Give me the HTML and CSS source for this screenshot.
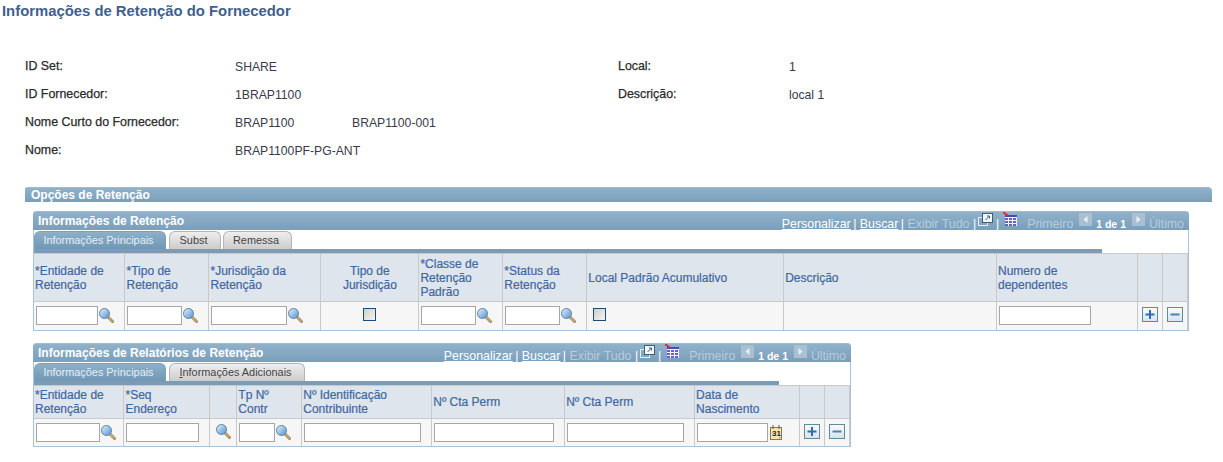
FILE: index.html
```html
<!doctype html>
<html>
<head>
	<title>Informações de Retenção do Fornecedor</title>
	<link rel="stylesheet" href="styles.css">
</head>

<body>
<svg class="defs" width="0" height="0">
	<defs>
		<linearGradient id="lens" x1="0" y1="0" x2="1" y2="1">
			<stop offset="0" stop-color="#e8f2fb"/>
			<stop offset="1" stop-color="#4f8fd0"/>
		</linearGradient>
		<linearGradient id="btnfill" x1="0" y1="0" x2="0" y2="1">
			<stop offset="0" stop-color="#fafcfd"/>
			<stop offset="1" stop-color="#d6e2ea"/>
		</linearGradient>
		<symbol id="lookup" viewBox="0 0 15 15">
			<path d="M9 9L13.500 13.500" stroke="#8a8a7a" stroke-width="3" stroke-linecap="round"/>
			<path d="M9.500 9.500L13.300 13.300" stroke="#e2a45c" stroke-width="1.500" stroke-linecap="round"/>
			<circle cx="5.500" cy="5.500" r="5" fill="url(#lens)" stroke="#5b84a8" stroke-width="1"/>
		</symbol>
		<symbol id="add" viewBox="0 0 16 15">
			<rect x=".5" y=".5" width="15" height="14" fill="url(#btnfill)" stroke="#5f8a9c"/>
			<path d="M8 3v9M3.500 7.500h9" stroke="#2f6db0" stroke-width="2"/>
		</symbol>
		<symbol id="del" viewBox="0 0 16 15">
			<rect x=".5" y=".5" width="15" height="14" fill="url(#btnfill)" stroke="#5f8a9c"/>
			<path d="M3.500 7.500h9" stroke="#4a80b8" stroke-width="2"/>
		</symbol>
		<symbol id="popout" viewBox="0 0 15 14">
			<rect x=".5" y="4.500" width="9" height="8" fill="none" stroke="#e8eef3"/>
			<rect x="4.500" y=".5" width="10" height="9" fill="#f4f7f9" stroke="#3d5f78"/>
			<path d="M7.500 7L11.500 3M9 3h2.500v2.500" fill="none" stroke="#3d5f78"/>
		</symbol>
		<symbol id="sheet" viewBox="0 0 14 14">
			<path d="M2 3h12v11H2z" fill="#f2f2fb"/>
			<path d="M2 3h12v2H2z" fill="#4a4ab0"/>
			<path d="M2 6h3v2H2zM6 6h3v2H6zM10 6h3v2h-3zM2 9h3v2H2zM6 9h3v2H6zM10 9h3v2h-3zM2 12h3v2H2zM6 12h3v2H6zM10 12h3v2h-3z" fill="#6464c8"/>
			<path d="M0 0l4.500 3.500" stroke="#e02a2a" stroke-width="2"/>
		</symbol>
		<symbol id="prev" viewBox="0 0 13 13">
			<rect width="13" height="13" fill="#a9c0d3"/>
			<path d="M8.500 3v7L4.500 6.500z" fill="#e8f0f5"/>
		</symbol>
		<symbol id="next" viewBox="0 0 13 13">
			<rect width="13" height="13" fill="#a9c0d3"/>
			<path d="M4.500 3v7L8.500 6.500z" fill="#e8f0f5"/>
		</symbol>
		<symbol id="calendar" viewBox="0 0 12 15">
			<rect x=".5" y="2.500" width="11" height="12" fill="#f4e6b4" stroke="#8a7a4a"/>
			<path d="M3 0v4M9 0v4" stroke="#7a5a2a"/>
			<path d="M9 14.500L11.500 12H9z" fill="#c8b070"/>
		</symbol>
	</defs>
</svg>

<h1 class="title">Informações de Retenção do Fornecedor</h1>

<div class="info">
	<div class="lbl">ID Set:</div>
	<div class="val">SHARE</div>
	<div class="lbl">Local:</div>
	<div class="val">1</div>
	<div class="lbl">ID Fornecedor:</div>
	<div class="val">1BRAP1100</div>
	<div class="lbl">Descrição:</div>
	<div class="val">local 1</div>
	<div class="lbl">Nome Curto do Fornecedor:</div>
	<div class="val val-pair"><span class="short">BRAP1100</span><span>BRAP1100-001</span></div>
	<div class="lbl"></div>
	<div class="val"></div>
	<div class="lbl">Nome:</div>
	<div class="val">BRAP1100PF-PG-ANT</div>
</div>

<div class="section-bar">Opções de Retenção</div>

<div class="grid grid-main">
	<div class="grid-head">
		<span class="grid-title">Informações de Retenção</span>
		<span class="nav">
			<a href="#">Personalizar</a> | <a href="#">Buscar</a> | <span class="off">Exibir Tudo</span> |
			<svg class="nav-pop"><use href="#popout"/></svg> |
			<svg class="nav-sheet"><use href="#sheet"/></svg>
			<span class="off first">Primeiro</span>
			<svg class="nav-arrow arrow-prev"><use href="#prev"/></svg>
			<b class="count">1 de 1</b>
			<svg class="nav-arrow"><use href="#next"/></svg>
			<span class="off">Último</span>
		</span>
	</div>
	<div class="tabs">
		<span class="tab on tab-a">Informações Principais</span>
		<span class="tab tab-b">Subst</span>
		<span class="tab tab-c">Remessa</span>
	</div>
	<div class="tab-line line-main"></div>
	<table class="tbl">
		<colgroup>
			<col class="w91"><col class="w84"><col class="w112"><col class="w98"><col class="w84"><col class="w84"><col class="w197"><col class="w213"><col class="w141"><col class="w25"><col class="w25">
		</colgroup>
		<tr class="hd hd-tall">
			<th><i>*</i>Entidade de<br>Retenção</th>
			<th><i>*</i>Tipo de<br>Retenção</th>
			<th><i>*</i>Jurisdição da<br>Retenção</th>
			<th class="mid">Tipo de<br>Jurisdição</th>
			<th><i>*</i>Classe de<br>Retenção<br>Padrão</th>
			<th><i>*</i>Status da<br>Retenção</th>
			<th>Local Padrão Acumulativo</th>
			<th>Descrição</th>
			<th>Numero de<br>dependentes</th>
			<th></th>
			<th></th>
		</tr>
		<tr class="row">
			<td><input class="in in-62" type="text"><svg class="look"><use href="#lookup"/></svg></td>
			<td><input class="in in-55" type="text"><svg class="look"><use href="#lookup"/></svg></td>
			<td><input class="in in-76" type="text"><svg class="look"><use href="#lookup"/></svg></td>
			<td class="mid"><span class="check"></span></td>
			<td><input class="in in-55" type="text"><svg class="look"><use href="#lookup"/></svg></td>
			<td><input class="in in-55" type="text"><svg class="look"><use href="#lookup"/></svg></td>
			<td><span class="check check-left"></span></td>
			<td></td>
			<td><input class="in in-92" type="text"></td>
			<td class="mid"><svg class="btn"><use href="#add"/></svg></td>
			<td class="mid"><svg class="btn"><use href="#del"/></svg></td>
		</tr>
	</table>
</div>

<div class="grid grid-sub">
	<div class="grid-head">
		<span class="grid-title">Informações de Relatórios de Retenção</span>
		<span class="nav">
			<a href="#">Personalizar</a> | <a href="#">Buscar</a> | <span class="off">Exibir Tudo</span> |
			<svg class="nav-pop"><use href="#popout"/></svg> |
			<svg class="nav-sheet"><use href="#sheet"/></svg>
			<span class="off first">Primeiro</span>
			<svg class="nav-arrow arrow-prev"><use href="#prev"/></svg>
			<b class="count">1 de 1</b>
			<svg class="nav-arrow"><use href="#next"/></svg>
			<span class="off">Último</span>
		</span>
	</div>
	<div class="tabs">
		<span class="tab on tab-a">Informações Principais</span>
		<span class="tab tab-d"><u>I</u>nformações Adicionais</span>
	</div>
	<div class="tab-line line-sub"></div>
	<table class="tbl">
		<colgroup>
			<col class="w90"><col class="w86"><col class="w27"><col class="w65"><col class="w130"><col class="w133"><col class="w130"><col class="w105"><col class="w25"><col class="w25">
		</colgroup>
		<tr class="hd hd-short">
			<th><i>*</i>Entidade de<br>Retenção</th>
			<th><i>*</i>Seq<br>Endereço</th>
			<th></th>
			<th>Tp Nº<br>Contr</th>
			<th>Nº Identificação<br>Contribuinte</th>
			<th>Nº Cta Perm</th>
			<th>Nº Cta Perm</th>
			<th>Data de<br>Nascimento</th>
			<th></th>
			<th></th>
		</tr>
		<tr class="row">
			<td><input class="in in-64" type="text"><svg class="look"><use href="#lookup"/></svg></td>
			<td><input class="in in-73" type="text"></td>
			<td class="mid"><svg class="look look-alone"><use href="#lookup"/></svg></td>
			<td><input class="in in-36" type="text"><svg class="look"><use href="#lookup"/></svg></td>
			<td><input class="in in-117" type="text"></td>
			<td><input class="in in-120" type="text"></td>
			<td><input class="in in-117" type="text"></td>
			<td><input class="in in-71" type="text"><span class="cal"><svg class="cal-icon"><use href="#calendar"/></svg><span class="cal-num">31</span></span></td>
			<td class="mid"><svg class="btn"><use href="#add"/></svg></td>
			<td class="mid"><svg class="btn"><use href="#del"/></svg></td>
		</tr>
	</table>
</div>
</body>
</html>
```

FILE: styles.css
```css
body {margin: 0; background: #fff; font-family: 'Liberation Sans', Arial, sans-serif; font-size: 12px; color: #333;}
.defs {display: block; height: 0;}

.title {margin: 0; padding: 3px 0 0 2px; height: 52px; box-sizing: border-box; font-size: 14.85px; line-height: 16px; font-weight: bold; color: #3f5f8e;}

.info {display: grid; grid-template-columns: 210px 383px 171px 200px; grid-auto-rows: 28px; margin-left: 25px; height: 135px;}
.lbl {font-size: 12.4px; color: #2b2b2b; line-height: 28px; -webkit-text-stroke: .25px #2b2b2b;}
.val {font-size: 12.2px; line-height: 30px; color: #3a3a4a;}
.short {display: inline-block; width: 117px;}

.section-bar {margin-left: 25px; width: 1187px; height: 15px; box-sizing: border-box; border-top: 1px solid #a9b9c6; border-top-right-radius: 4px; border-top-left-radius: 2px; background: linear-gradient(#90b1ca, #7a9fbb); color: #fff; font-weight: bold; font-size: 12px; line-height: 14px; padding-left: 6px;}

.grid {margin-left: 33px; box-sizing: border-box; border: 1px solid #a9c4da; border-top: 0; border-radius: 4px 4px 0 0;}
.grid-main {width: 1156px; margin-top: 9px;}
.grid-sub {width: 818px; margin-top: 12px;}

.grid-head {display: flex; justify-content: space-between; height: 19px; box-sizing: border-box; margin: 0 -1px; border-top: 1px solid #a9b9c6; border-radius: 4px 4px 0 0; background: linear-gradient(#90b1ca, #7a9fbb); padding: 0 5px 0 5px; line-height: 18px;}
.grid-title {color: #fff; font-weight: bold; font-size: 12px;}
.nav {color: #fff; font-size: 12.4px; line-height: 17px; white-space: nowrap;}
.nav a {color: #fff; margin-right: -1px;}
.nav .off {color: #b9ccdb;}
.nav .first {margin-left: 7px;}
.count {color: #fff; font-size: 10.5px; margin: 0 3px 0 1px;}
.nav-pop {width: 15px; height: 14px; margin-left: -2px; vertical-align: 1px;}
.nav-sheet {width: 14px; height: 14px; vertical-align: 2px;}
.nav-arrow {width: 13px; height: 13px; vertical-align: 2px;}
.arrow-prev {margin-left: 2px;}

.tabs {display: flex; height: 19px; padding-top: 1px; box-sizing: border-box;}
.tab {display: block; box-sizing: border-box; height: 18px; margin-right: 2px; padding-right: 3px; border: 1px solid #b4b4b4; border-bottom: 0; border-radius: 6px 6px 0 0; background: linear-gradient(#eee, #ccc); color: #444; font-size: 10.9px; line-height: 17px; text-align: center;}
.tab.on {border-color: #7a9fbb; background: linear-gradient(#8eb0c8, #6f97b5); color: #e6eef4; margin-right: 3px;}
.tab u {text-decoration: underline;}
.tab-a {width: 132px;}
.tab-b {width: 52px;}
.tab-c {width: 69px;}
.tab-d {width: 136px;}

.tab-line {height: 4px; background: #7d9bb3;}
.line-main {width: 1068px;}
.line-sub {width: 745px;}

.tbl {border-collapse: collapse; table-layout: fixed; font-size: 12px;}
.tbl th, .tbl td {border: 1px solid #c9c9c9; padding: 0 2px; box-sizing: border-box;}
.tbl th {padding: 0 1px;}
.tbl tr > :first-child {border-left: 0;}
.tbl tr:last-child td {border-bottom: 0;}
.tbl tr:first-child th {border-top: 1px solid #c9c9c9;}
.hd th {background: #dee5ec; color: #3f67a0; font-weight: normal; text-align: left; line-height: 14px; -webkit-text-stroke: .2px #3f67a0;}
.hd i {font-style: normal;}
.hd-tall {height: 48px;}
.hd-short {height: 33px;}
.row td {background: #f6f6f6; height: 28px; white-space: nowrap;}
.tbl .mid {text-align: center;}

.in {height: 19px; box-sizing: border-box; border: 1px solid #a6a6a6; background: #fff; padding: 0; margin: 0; vertical-align: middle;}
.in-36 {width: 36px;}
.in-55 {width: 55px;}
.in-62 {width: 62px;}
.in-64 {width: 64px;}
.in-71 {width: 71px;}
.in-73 {width: 73px;}
.in-76 {width: 76px;}
.in-92 {width: 92px;}
.in-117 {width: 117px;}
.in-120 {width: 120px;}

.look {width: 15px; height: 15px; margin-left: 1px; vertical-align: middle;}
.look-alone {margin: 0 0 2px;}
.check {display: inline-block; width: 13px; height: 13px; margin-bottom: 2px; box-sizing: border-box; border: 1px solid #1f4a74; background: linear-gradient(135deg, #cfcfca, #f4f4f4); vertical-align: middle;}
.check-left {margin-left: 4px;}
.btn {width: 16px; height: 15px; vertical-align: middle; margin-bottom: 2px;}

.cal {display: inline-block; width: 12px; height: 15px; margin-left: 2px; vertical-align: middle; position: relative;}
.cal-icon {display: block; width: 12px; height: 15px;}
.cal-num {position: absolute; left: 2px; top: 4px; font-size: 8px; line-height: 9px; font-weight: bold; color: #222;}

.w25 {width: 25px;}
.w27 {width: 27px;}
.w65 {width: 65px;}
.w84 {width: 84px;}
.w86 {width: 86px;}
.w90 {width: 90px;}
.w91 {width: 91px;}
.w98 {width: 98px;}
.w105 {width: 105px;}
.w112 {width: 112px;}
.w130 {width: 130px;}
.w133 {width: 133px;}
.w141 {width: 141px;}
.w197 {width: 197px;}
.w213 {width: 213px;}
```
